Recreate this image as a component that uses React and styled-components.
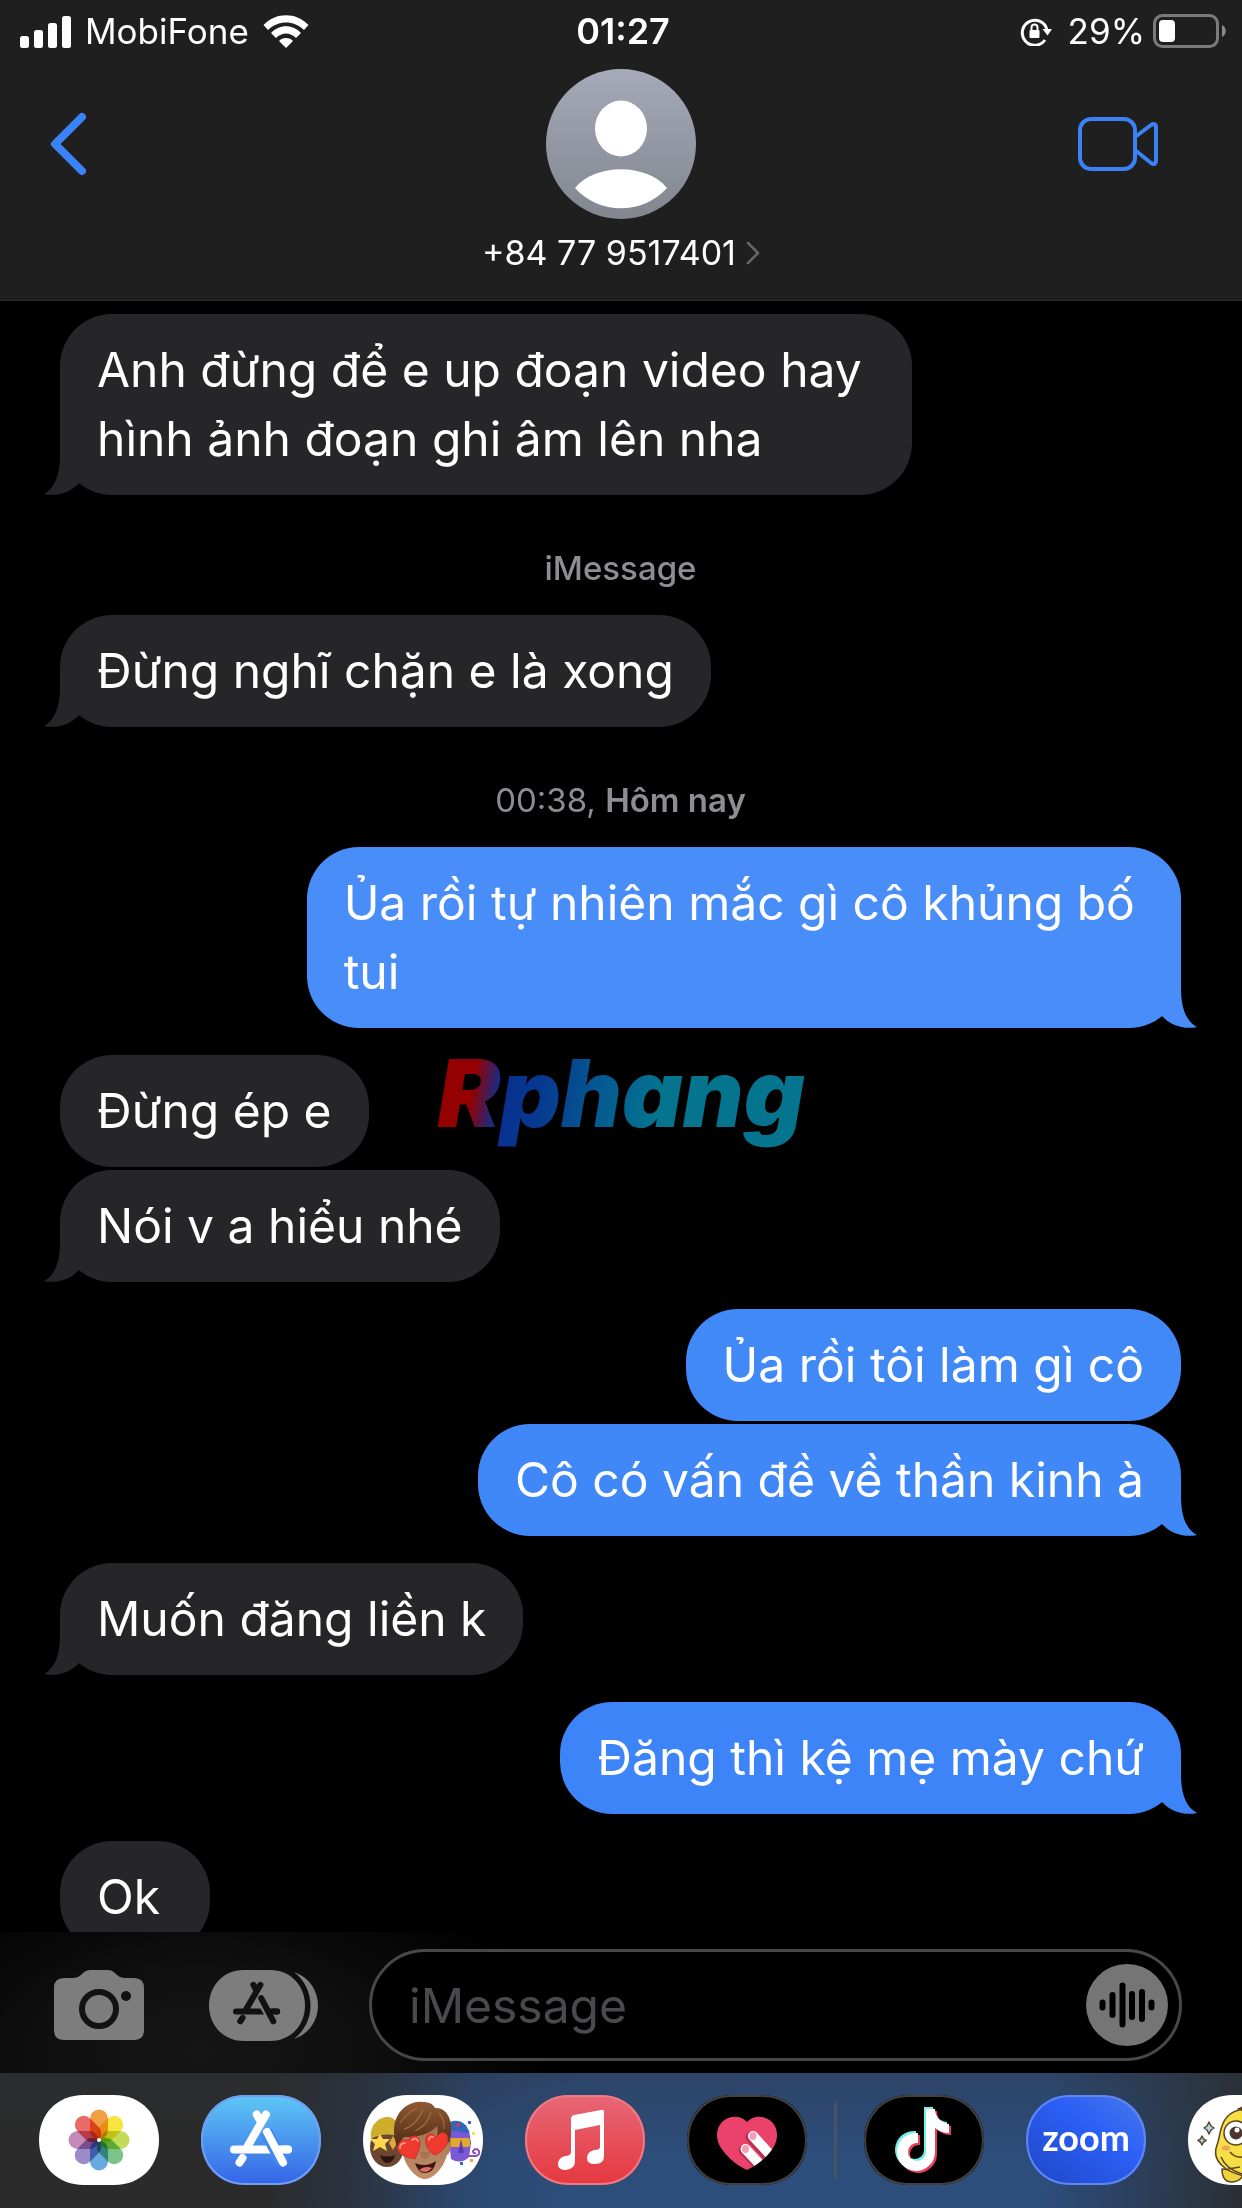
import React from "react";
import styled, { createGlobalStyle } from "styled-components";

const GlobalStyle = createGlobalStyle`
  * { box-sizing: border-box; }
  body { margin: 0; background: #000; }
  button, input { font: inherit; color: inherit; border: 0; padding: 0; background: none; }
  svg { display: block; flex: none; }
`;

const Screen = styled.div`
  display: flex;
  flex-direction: column;
  height: 100vh;
  overflow: hidden;
  background: #000;
  color: #fff;
  font-family: Inter, Roboto, "Liberation Sans", sans-serif;
`;

const Header = styled.header`
  flex: none;
  background: #1f1f1f;
  border-bottom: 1px solid #2b2b2c;
`;

const StatusBar = styled.div`
  display: grid;
  grid-template-columns: 1fr auto 1fr;
  align-items: center;
  height: 62px;
  padding: 0 16px 0 20px;
  font-size: 35px;
  line-height: 40px;
`;

const StatusSide = styled.div`
  display: flex;
  align-items: center;
  justify-content: ${(p) => (p.$end ? "flex-end" : "flex-start")};
  gap: ${(p) => (p.$end ? 8 : 14)}px;
`;

const Percent = styled.span`
  margin-left: 8px;
`;

const Clock = styled.time`
  font-size: 36px;
  font-weight: 600;
`;

const Nav = styled.nav`
  display: grid;
  grid-template-columns: 1fr auto 1fr;
  padding: 7px 84px 27px 50px;
`;

const NavButton = styled.button`
  display: flex;
  align-items: center;
  height: 150px;
  justify-self: ${(p) => (p.$end ? "end" : "start")};
`;

const Contact = styled.button`
  display: flex;
  flex-direction: column;
  align-items: center;
  gap: 14px;
  margin-left: 34px;
`;

const ContactName = styled.span`
  display: flex;
  align-items: center;
  gap: 10px;
  font-size: 34px;
  line-height: 40px;
`;

const Thread = styled.main`
  position: relative;
  flex: 1;
  min-height: 0;
  overflow: hidden;
  display: flex;
  flex-direction: column;
  gap: 27px;
  padding: 13px 61px 0 60px;
`;

const Group = styled.div`
  flex: none;
  display: flex;
  flex-direction: column;
  align-items: ${(p) => (p.$sent ? "flex-end" : "flex-start")};
  gap: 3px;
`;

const BubbleBox = styled.div`
  position: relative;
  min-width: 150px;
  max-width: ${(p) => (p.$sent ? 78 : 76)}%;
  padding: 21px 37px 22px;
  border-radius: 52px;
  background: ${(p) => p.$color};
  font-size: 48px;
  line-height: 69px;
`;

const Tail = styled.svg`
  position: absolute;
  bottom: 0;
  ${(p) => (p.$sent ? "right: -16px; transform: scaleX(-1);" : "left: -16px;")}
`;

const Stamp = styled.div`
  flex: none;
  padding-top: 26px;
  text-align: center;
  font-size: 33px;
  line-height: 40px;
  font-weight: ${(p) => (p.$medium ? 500 : 400)};
  color: #8d8d92;

  strong { font-weight: 600; }
`;

const Watermark = styled.div`
  position: absolute;
  top: 737px;
  left: 0;
  right: 0;
  display: flex;
  justify-content: center;
  pointer-events: none;

  span {
    padding: 0 8px;
    font-size: 94px;
    line-height: 110px;
    font-weight: 900;
    font-style: italic;
    color: transparent;
    background: linear-gradient(100deg, #950000 13%, #0a2f92 20%, #06398f 30%, #055a92 45%, #04748f 60%);
    background-clip: text;
    -webkit-background-clip: text;
  }
`;

const Composer = styled.form`
  flex: none;
  display: flex;
  align-items: center;
  padding: 17px 60px 12px 54px;
  background: radial-gradient(ellipse 360px 200px at 200px 120px, #151515, #101010 40%, #000 100%);
`;

const IconButton = styled.button`
  display: flex;
  margin-right: ${(p) => p.$gap}px;
`;

const Field = styled.label`
  flex: 1;
  min-width: 0;
  display: flex;
  align-items: center;
  height: 112px;
  padding: 0 11px 0 37px;
  border: 3px solid #48484a;
  border-radius: 56px;
  background: #000;
`;

const TextBox = styled.input`
  flex: 1;
  min-width: 0;
  font-size: 48px;
  line-height: 69px;
  outline: 0;

  &::placeholder { color: #4a4a4d; opacity: 1; }
`;

const AppStrip = styled.footer`
  flex: none;
  display: flex;
  align-items: center;
  gap: 42px;
  height: 135px;
  padding: 0 0 1px 39px;
  overflow: hidden;
  background:
    linear-gradient(rgba(43, 48, 54, 0.3), rgba(43, 48, 54, 0) 60%),
    linear-gradient(95deg, #2b2b2b 22%, #2b3544 30%, #2c4870 38%, #2d4d7b 46%, #2d4d7b 84%, #2b3b50 94%, #2b2e33 100%);
`;

const AppButton = styled.button`
  position: relative;
  flex: none;
  display: flex;
`;

const Divider = styled.span`
  flex: none;
  width: 3px;
  height: 77px;
  margin: 0 -15px;
  border-radius: 2px;
  background: #465366;
`;

const ZoomWord = styled.span`
  position: absolute;
  inset: 0;
  text-align: center;
  font: 700 36px/84px Lato, sans-serif;
`;

function Bubble({ sent, color, tail, children }) {
  const fill = color || "#262628";
  return (
    <BubbleBox $sent={sent} $color={fill}>
      {children}
      {tail && (
        <Tail $sent={sent} width="40" height="56" viewBox="0 0 40 56" fill={fill} aria-hidden="true">
          <path d="M16 0V16C16 36 11 49 0 55C13 58 27 53 35 44V0Z" />
        </Tail>
      )}
    </BubbleBox>
  );
}

const SHAPE = "M45 0H75C103 0 120 20 120 45S103 90 75 90H45C17 90 0 70 0 45S17 0 45 0Z";
const SHAPE_IN = "M45 1H75C102 1 119 21 119 45S102 89 75 89H45C18 89 1 69 1 45S18 1 45 1Z";

function AppIcon({ label, fill, stroke, defs, word, children }) {
  return (
    <AppButton type="button" aria-label={label}>
      <svg width="120" height="90" viewBox="0 0 120 90">
        <defs>{defs}</defs>
        <path d={SHAPE} fill={fill} />
        {children}
        {stroke && <path d={SHAPE_IN} fill="none" stroke={stroke} strokeWidth="2" />}
      </svg>
      {word && <ZoomWord>{word}</ZoomWord>}
    </AppButton>
  );
}

const Gradient = ({ id, from, to, slant }) => (
  <linearGradient id={id} x1={slant ? 1 : 0} y1="0" x2="0" y2="1">
    <stop offset="0" stopColor={from} />
    <stop offset="1" stopColor={to} />
  </linearGradient>
);

const PETALS = ["#f0a044", "#f7e43e", "#c3dc58", "#7cc58a", "#68aadd", "#9a8cc6", "#c58bb8", "#e96a66"];
const HEART = "M60 27C66 20 78 20 85 27C91 33 92 44 86 53C80 62 71 70 60 75C49 70 40 62 34 53C28 44 29 33 35 27C42 20 54 20 60 27Z";
const NOTE = "M62 14H71C71 22 77 28 85 29V38C80 38 75 36 71 33V57A19 19 0 1 1 54 38V48A9 9 0 1 0 62 57Z";

function StoreGlyph({ stroke, cut }) {
  return (
    <g fill="none" stroke={stroke} strokeWidth="8" strokeLinecap="round">
      <path d="M65 19.500L45 54M55.700 19.500L60 27M33 54.500H87M41.500 63L38.500 67.500" />
      <path d="M65 37L82 67.500" stroke={cut} strokeWidth="13" strokeLinecap="butt" />
      <path d="M66 37L82 67.500" />
      <path d="M78 54.500H87" />
    </g>
  );
}

export default function App() {
  return (
    <Screen>
      <GlobalStyle />
      <Header>
        <StatusBar>
          <StatusSide>
            <svg width="51" height="33" viewBox="0 0 51 33" fill="#fff" aria-label="Signal">
              <rect x="0" y="21" width="9" height="12" rx="2.500" />
              <rect x="14" y="15" width="9" height="18" rx="2.500" />
              <rect x="28" y="8" width="9" height="25" rx="2.500" />
              <rect x="42" y="1" width="9" height="32" rx="2.500" />
            </svg>
            <span>MobiFone</span>
            <svg width="46" height="33" viewBox="0 0 46 33" fill="#fff" aria-label="Wi-Fi">
              <path d="M23 33L16 26C19 22 27 22 30 26Z" />
              <path d="M13 23L8 18C16 9 30 9 38 18L33 23C27 17 19 17 13 23Z" />
              <path d="M5 15L.5 10C13-3 33-3 45.500 10L41 15C31 5 15 5 5 15Z" />
            </svg>
          </StatusSide>
          <Clock>01:27</Clock>
          <StatusSide $end>
            <svg width="32" height="30" viewBox="0 0 32 30" fill="none" stroke="#fff" aria-label="Rotation lock">
              <path d="M25 24A12.500 12.500 0 1 1 27 14" strokeWidth="3" />
              <path d="M22.500 13H32L27.500 19.500Z" fill="#fff" stroke="none" />
              <rect x="9.500" y="14" width="10" height="8" rx="1" fill="#fff" stroke="none" />
              <path d="M11.500 15V11.500a3 3 0 0 1 6 0V15" strokeWidth="2" />
            </svg>
            <Percent>29%</Percent>
            <svg width="73" height="34" viewBox="0 0 73 34" aria-label="Battery">
              <rect x="1.500" y="1.500" width="63" height="31" rx="8" fill="none" stroke="#7b7b7b" strokeWidth="3" />
              <rect x="6" y="6" width="16" height="22" rx="4" fill="#fff" />
              <path d="M69 11C74 13 74 21 69 23Z" fill="#8b8b8b" />
            </svg>
          </StatusSide>
        </StatusBar>
        <Nav>
          <NavButton type="button" aria-label="Back">
            <svg width="36" height="64" viewBox="0 0 36 64" fill="none" stroke="#3b82f7" strokeWidth="8" strokeLinecap="round" strokeLinejoin="round">
              <path d="M32 5L5 32L32 59" />
            </svg>
          </NavButton>
          <Contact type="button">
            <svg width="150" height="150" viewBox="0 0 150 150">
              <defs>
                <Gradient id="avatar" from="#a6aab9" to="#82868f" />
              </defs>
              <circle cx="75" cy="75" r="75" fill="url(#avatar)" />
              <ellipse cx="75" cy="59.500" rx="26" ry="28" fill="#fff" />
              <path d="M29 119C49 94 101 94 121 119C97 146 53 146 29 119Z" fill="#fff" />
            </svg>
            <ContactName>
              +84 77 9517401
              <svg width="14" height="24" viewBox="0 0 14 24" fill="none" stroke="#66666a" strokeWidth="2.500" strokeLinecap="round" strokeLinejoin="round">
                <path d="M2 2L12 12L2 22" />
              </svg>
            </ContactName>
          </Contact>
          <NavButton $end type="button" aria-label="FaceTime">
            <svg width="80" height="54" viewBox="0 0 80 54" fill="none" stroke="#3b82f7" strokeWidth="4" strokeLinejoin="round">
              <rect x="2" y="2" width="55" height="50" rx="11" />
              <path d="M57 20L73 8Q78 5 78 11V43Q78 49 73 46L57 33" />
            </svg>
          </NavButton>
        </Nav>
      </Header>

      <Thread>
        <Group>
          <Bubble tail>Anh đừng để e up đoạn video hay hình ảnh đoạn ghi âm lên nha</Bubble>
        </Group>
        <Stamp $medium>iMessage</Stamp>
        <Group>
          <Bubble tail>Đừng nghĩ chặn e là xong</Bubble>
        </Group>
        <Stamp>
          00:38, <strong>Hôm nay</strong>
        </Stamp>
        <Group $sent>
          <Bubble sent tail color="#488df8">Ủa rồi tự nhiên mắc gì cô khủng bố tui</Bubble>
        </Group>
        <Group>
          <Bubble>Đừng ép e</Bubble>
          <Bubble tail>Nói v a hiểu nhé</Bubble>
        </Group>
        <Group $sent>
          <Bubble sent color="#4289f8">Ủa rồi tôi làm gì cô</Bubble>
          <Bubble sent tail color="#4088f8">Cô có vấn đề về thần kinh à</Bubble>
        </Group>
        <Group>
          <Bubble tail>Muốn đăng liền k</Bubble>
        </Group>
        <Group $sent>
          <Bubble sent tail color="#3c84f7">Đăng thì kệ mẹ mày chứ</Bubble>
        </Group>
        <Group>
          <Bubble>Ok</Bubble>
        </Group>
        <Watermark>
          <span>Rphang</span>
        </Watermark>
      </Thread>

      <Composer onSubmit={(e) => e.preventDefault()}>
        <IconButton type="button" aria-label="Camera" $gap={65}>
          <svg width="90" height="70" viewBox="0 0 90 70">
            <path d="M10 8H20Q24 8 27 5L29 3Q32 0 36 0H54Q58 0 61 3L63 5Q66 8 70 8H80Q90 8 90 18V60Q90 70 80 70H10Q0 70 0 60V18Q0 8 10 8Z" fill="#7d7d7d" />
            <circle cx="45" cy="39" r="17" fill="none" stroke="#121212" strokeWidth="6" />
            <circle cx="72" cy="26" r="5" fill="#121212" />
          </svg>
        </IconButton>
        <IconButton type="button" aria-label="Apps" $gap={51}>
          <svg width="109" height="71" viewBox="0 0 109 71">
            <path d="M35 0H61C82 0 96 16 96 35.500S82 71 61 71H35C14 71 0 55 0 35.500S14 0 35 0Z" fill="#7d7d7d" />
            <path d="M85 2C117 13 117 58 85 69C107 52 107 19 85 2Z" fill="#7d7d7d" />
            <g transform="translate(2 0) scale(.76)">
              <StoreGlyph stroke="#121212" cut="#7d7d7d" />
            </g>
          </svg>
        </IconButton>
        <Field>
          <TextBox type="text" placeholder="iMessage" aria-label="iMessage" />
          <button type="button" aria-label="Record audio">
            <svg width="82" height="82" viewBox="0 0 82 82">
              <circle cx="41" cy="41" r="41" fill="#757575" />
              <path d="M16.500 38.500V43.500M26.500 31V51M36.500 21.500V60.500M46 30V53M56 28V55M65.500 38.500V43.500" stroke="#000" strokeWidth="6" strokeLinecap="round" />
            </svg>
          </button>
        </Field>
      </Composer>

      <AppStrip>
        <AppIcon label="Photos" fill="#fff">
          <g style={{ isolation: "isolate" }}>
            {PETALS.map((c, i) => (
              <rect key={c} x="51" y="14.500" width="18" height="30" rx="9" fill={c} transform={`rotate(${i * 45} 60 45)`} style={{ mixBlendMode: "multiply" }} />
            ))}
          </g>
          <circle cx="60" cy="45" r="2" fill="#fff" />
        </AppIcon>

        <AppIcon label="App Store" fill="url(#store)" stroke="#6f9ef2" defs={<Gradient id="store" from="#5ec8f6" to="#3563e6" />}>
          <StoreGlyph stroke="#fff" cut="#4489ee" />
        </AppIcon>

        <AppIcon label="Memoji" fill="#fff" defs={<><Gradient id="hair" from="#8d5a33" to="#4f2a14" /><Gradient id="skin" from="#94694a" to="#c39069" /></>}>
          <ellipse cx="24" cy="52" rx="17" ry="20" fill="#6b4630" />
          <path d="M8 44C6 28 18 21 26 22C34 23 37 32 36 42C27 38 17 39 8 44Z" fill="#cfae2e" />
          <path d="M17 39L20 44L27 44L22 49L24 56L17 52L10 56L12 49L7 44L14 44Z" fill="#fbd84e" />
          <path d="M30 41L34 48L30 55L26 48Z" fill="#e0a93a" />
          <path d="M17 60Q24 63 32 60Q30 68 24 68Q19 67 17 60Z" fill="#2a1310" />
          <path d="M85 35H106L108 48L106 62Q98 70 88 64Z" fill="#7a58d6" />
          <path d="M84 30C88 23 104 24 106 38L86 35Z" fill="#2f68b8" />
          <circle cx="95" cy="30" r="2" fill="#e2364c" />
          <rect x="87" y="43" width="20" height="9" rx="2" fill="#e3a82e" />
          <path d="M98 44L95 58H101Z" fill="#5a3bb5" />
          <path d="M104 61H113Q117 60 116 56Q113 52 110 56Q110 59 113 58" fill="none" stroke="#8b52b6" strokeWidth="2" />
          <g>
            <rect x="105" y="26" width="3" height="3" fill="#3267d6" />
            <rect x="109" y="37" width="3" height="3" fill="#f2e84b" />
            <rect x="97" y="67" width="3" height="3" fill="#3267d6" />
            <rect x="107" y="64" width="3" height="3" fill="#f2a13b" />
          </g>
          <path d="M34 40C33 20 44 12 61 12S88 22 87 42C89 48 88 58 84 60C80 74 70 84 62 84S44 74 40 60C34 58 33 48 34 40Z" fill="url(#skin)" />
          <path d="M32 44C27 22 42 5 60 7C66 7 70 9 72 13C86 12 92 30 86 48C84 45 82 41 81 37C78 40 76 40 74 40C75 37 75 34 74 31C66 40 54 42 41 42Q37 46 36 52Q33 52 32 44Z" fill="url(#hair)" />
          <path d="M41 34Q54 30 60 14M52 36Q65 30 68 17M37 28Q44 18 54 13M76 18Q82 25 81 34" fill="none" stroke="#a56c3b" strokeWidth="1.200" />
          <path d="M57 57Q57 64 62 64T67 57" fill="#a87452" />
          <path d="M52 68Q63 73 73 66Q71 78 62 78Q55 78 52 68Z" fill="#3a1512" />
          <path d="M56 75Q62 70 69 73Q63 80 56 75Z" fill="#dc6d68" />
          <g fill="#ef3b2f" stroke="#c92922" strokeWidth=".8">
            <path d="M45 46C48 39 57 40 57 48C57 55 53 61 52 64C46 63 38 61 35 55C33 48 41 42 45 46Z" />
            <path d="M73 43C76 36 84 36 85 43C86 49 79 57 72 60C67 58 61 50 63 43C65 37 71 38 73 43Z" />
          </g>
          <path d="M37 53Q37 48 42 48M66 45Q66 41 70 42M49 45Q53 42 55 46" fill="none" stroke="#ff8b7c" strokeWidth="2" strokeLinecap="round" />
        </AppIcon>

        <AppIcon label="Music" fill="url(#music)" stroke="#ee7a84" defs={<Gradient id="music" from="#e76777" to="#e5383f" />}>
          <path d="M46 24Q46 21 49 20L76 15Q79 14 79 17V61Q79 69 70 69Q62 69 62 63Q62 57 69 55Q75 55 75 52V30L50 35V66Q50 74 41 75Q33 75 33 69Q33 63 40 61Q46 61 46 57Z" fill="#fff" />
        </AppIcon>

        <AppIcon label="Digital Touch" fill="#000" stroke="#414141" defs={<clipPath id="heart"><path d={HEART} /></clipPath>}>
          <path d={HEART} fill="#ea426a" />
          <g clipPath="url(#heart)" strokeLinecap="round">
            <path d="M64 42L86 66M57 55L80 79" stroke="#b92d51" strokeWidth="11" />
            <path d="M66 41L88 65M58.500 54L82 79" stroke="#fff" strokeWidth="10" />
          </g>
          <ellipse cx="66" cy="41" rx="3.500" ry="4" fill="#f2a0b6" />
          <ellipse cx="58.500" cy="54" rx="3.500" ry="4" fill="#f2a0b6" />
        </AppIcon>

        <Divider />

        <AppIcon label="TikTok" fill="#000" stroke="#414141">
          <path d={NOTE} fill="#72f0ec" transform="translate(-2 -2)" />
          <path d={NOTE} fill="#e9425e" transform="translate(2 2)" />
          <path d={NOTE} fill="#fff" />
        </AppIcon>

        <AppIcon label="Zoom" fill="url(#zoom)" stroke="#6087f0" word="zoom" defs={
          <linearGradient id="zoom" x1="1" y1="0" x2="0" y2="1">
            <stop offset="0" stopColor="#4a79e9" />
            <stop offset=".4" stopColor="#2b5ff6" />
            <stop offset="1" stopColor="#2047c4" />
          </linearGradient>
        } />

        <AppIcon label="Stickers" fill="#fff" defs={<clipPath id="pill"><path d={SHAPE} /></clipPath>}>
          <g clipPath="url(#pill)" stroke="#5b4423" strokeWidth="1.500" strokeLinejoin="round">
            <path d="M34 74Q34 87 44 87Q55 86 56 76Z" fill="#f0d43c" />
            <path d="M51 15Q54 12 70 12V84Q46 80 37 73C27 66 26 58 29 50C33 40 31 20 51 15Z" fill="#f6de45" />
            <path d="M50 14Q54 13 56 10V16Z" fill="#4b3730" />
            <path d="M33 62Q38 74 54 79M42 57Q47 63 54 62M40 74L52 72" fill="none" />
            <ellipse cx="48" cy="38" rx="12" ry="12" fill="#fff" />
            <circle cx="48" cy="38" r="6.500" fill="#4b3730" stroke="none" />
            <circle cx="49" cy="35" r="2.500" fill="#fff" stroke="none" />
            <ellipse cx="38" cy="53" rx="4" ry="2.500" fill="#f0a35c" stroke="none" />
            <path d="M21 27L23 31L26 33L23 35L21 39L19 35L16 33L19 31ZM14 41L15.500 44L18 45.500L15.500 47L14 50L12.500 47L10 45.500L12.500 44Z" fill="#a9d8f5" />
          </g>
        </AppIcon>
      </AppStrip>
    </Screen>
  );
}
